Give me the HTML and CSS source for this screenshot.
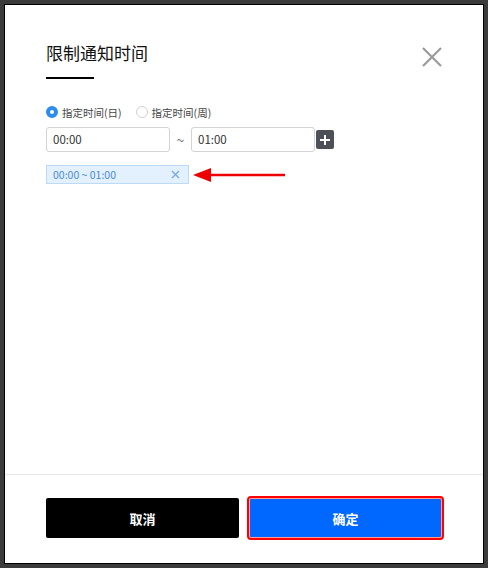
FILE: index.html
```html
<!DOCTYPE html>
<html lang="zh">
<head>
<meta charset="utf-8">
<link rel="stylesheet" href="styles.css">
</head>
<body>
<div class="dialog">
  <div class="header">
    <div class="title-wrap">
      <div class="title">限制通知时间</div>
      <div class="title-line"></div>
    </div>
    <svg class="close" width="22" height="22" viewBox="0 0 22 22"><path d="M2 2 L20 20 M20 2 L2 20" stroke="#9a9a9a" stroke-width="2.2" fill="none"/></svg>
  </div>
  <div class="body">
    <div class="radios">
      <label class="radio"><span class="dot checked"></span>指定时间(日)</label>
      <label class="radio"><span class="dot"></span>指定时间(周)</label>
    </div>
    <div class="range">
      <div class="input">00:00</div>
      <span class="tilde">~</span>
      <div class="input">01:00</div>
      <div class="plus"><svg width="10" height="10" viewBox="0 0 10 10"><path d="M5 0 V10 M0 5 H10" stroke="#fff" stroke-width="2"/></svg></div>
    </div>
    <div class="tag-row">
      <div class="tag"><span>00:00 ~ 01:00</span><svg width="9" height="9" viewBox="0 0 9 9"><path d="M1 1 L8 8 M8 1 L1 8" stroke="#7aa7e6" stroke-width="1.4"/></svg></div>
      <svg class="arrow" width="94" height="16" viewBox="0 0 94 16"><path d="M18 8 H92" stroke="#ee0000" stroke-width="2.4"/><path d="M0 8 L18 1 L18 15 Z" fill="#ee0000"/></svg>
    </div>
  </div>
  <div class="footer">
    <button class="btn cancel">取消</button>
    <button class="btn ok">确定</button>
  </div>
</div>
</body>
</html>
```

FILE: styles.css
```css
html, body {
  margin: 0;
  padding: 0;
  background: #3b3b3b;
  font-family: "Noto Sans CJK SC", "Noto Sans", sans-serif;
}
.dialog {
  margin: 4px;
  width: 478px;
  height: 558px;
  border: 1px solid #000;
  background: #fff;
  display: flex;
  flex-direction: column;
  box-sizing: content-box;
}
.header {
  display: flex;
  justify-content: space-between;
  align-items: flex-start;
  padding: 36px 41px 0 41px;
}
.title {
  font-size: 17px;
  line-height: 24px;
  color: #111;
}
.title-line {
  margin-top: 12px;
  width: 48px;
  height: 2px;
  background: #000;
}
.close {
  margin-top: 5px;
  margin-right: -1px;
}
.body {
  flex: 1;
  padding: 0 41px;
  border-bottom: 1px solid #e8e8e8;
}
.radios {
  display: flex;
  gap: 14px;
  margin-top: 25px;
  height: 16px;
  align-items: center;
}
.radio {
  display: flex;
  align-items: center;
  gap: 4px;
  font-size: 10.5px;
  color: #444;
}
.dot {
  width: 10px;
  height: 10px;
  border: 1px solid #d0d0d0;
  border-radius: 50%;
  box-sizing: content-box;
}
.dot.checked {
  width: 4px;
  height: 4px;
  border: 4px solid #2d8cf0;
  background: #fff;
}
.range {
  display: flex;
  align-items: center;
  margin-top: 7px;
}
.input {
  width: 124px;
  height: 25px;
  box-sizing: border-box;
  border: 1px solid #d4d4d4;
  border-radius: 3px;
  font-size: 11.5px;
  line-height: 23px;
  padding-left: 6px;
  color: #333;
}
.tilde {
  width: 21px;
  text-align: center;
  font-size: 14px;
  color: #777;
}
.plus {
  width: 18px;
  height: 19px;
  background: #4d5057;
  border-radius: 2px;
  display: flex;
  align-items: center;
  justify-content: center;
  margin-left: 1px;
}
.tag-row {
  display: flex;
  align-items: center;
  margin-top: 13px;
  gap: 4px;
}
.tag {
  width: 143px;
  height: 19px;
  box-sizing: border-box;
  background: #e3f0fd;
  border: 1px solid #bcd9f7;
  display: flex;
  align-items: center;
  justify-content: space-between;
  padding: 0 8px 0 6px;
  font-size: 10.5px;
  color: #4a8ad8;
}
.footer {
  display: flex;
  gap: 10px;
  padding: 23px 41px 25px 41px;
}
.btn {
  width: 194px;
  height: 40px;
  border: none;
  border-radius: 2px;
  font-family: "Noto Sans CJK SC", sans-serif;
  font-size: 13px;
  font-weight: bold;
  color: #fff;
  padding: 0;
}
.cancel {
  background: #000;
}
.ok {
  background: #0068ff;
  border: 1px solid #ff9a9a;
  outline: 2px solid #ff0000;
}
```
